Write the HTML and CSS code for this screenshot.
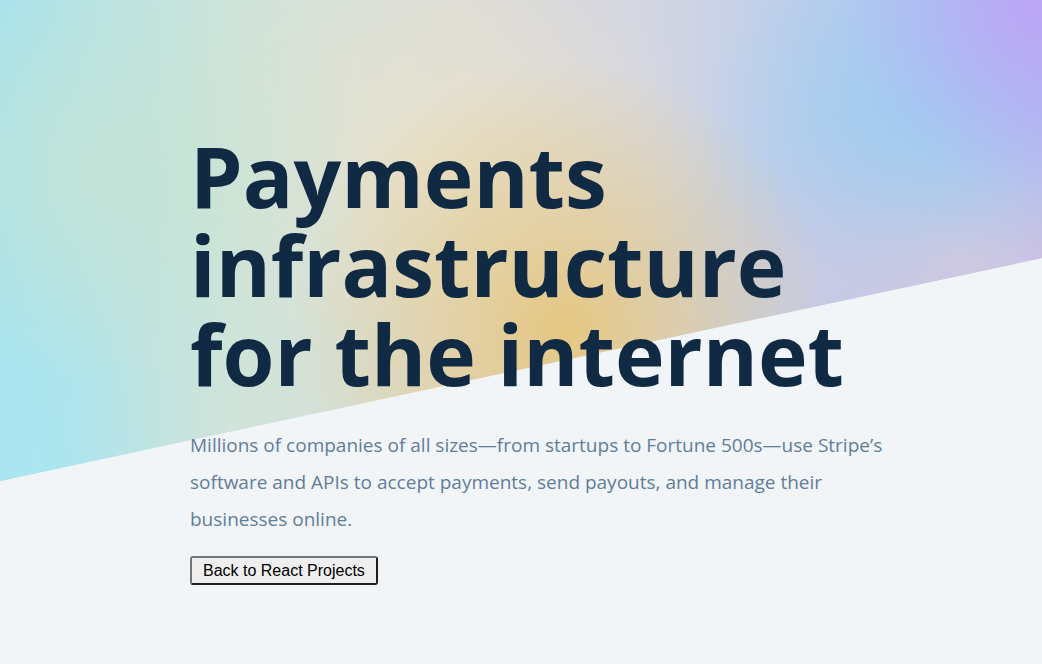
FILE: index.html
```html
<!DOCTYPE html>
<html lang="en">
<head>
<meta charset="utf-8">
<title>Stripe</title>
<link rel="stylesheet" href="styles.css">
</head>
<body>
<section class="hero">
  <div class="hero-bg"></div>
  <div class="hero-info">
    <h1 class="hero-title">Payments<br>infrastructure<br>for the internet</h1>
    <p class="hero-text">Millions of companies of all sizes—from startups to Fortune 500s—use Stripe’s software and APIs to accept payments, send payouts, and manage their businesses online.</p>
    <button class="back-btn" type="button">Back to React Projects</button>
  </div>
</section>
</body>
</html>
```

FILE: styles.css
```css
* { box-sizing: border-box; }
html, body { margin: 0; padding: 0; }
body {
  background: #f2f5f8;
  font-family: "Open Sans", "Noto Sans", sans-serif;
}
.hero {
  position: relative;
  min-height: 664px;
  overflow: hidden;
}
.hero-bg {
  position: absolute;
  inset: 0;
  clip-path: polygon(0 0, 100% 0, 100% 258px, 0 481px);
  background:
    radial-gradient(circle at 565px 330px, rgba(230,198,124,0.95) 0, rgba(230,198,124,0.6) 90px, rgba(230,198,124,0) 270px),
    radial-gradient(circle at 1042px 0, rgba(188,166,246,1) 0, rgba(188,166,246,0) 200px),
    radial-gradient(ellipse 220px 180px at 920px 115px, rgba(158,206,240,0.85) 0, rgba(158,206,240,0) 100%),
    radial-gradient(ellipse 260px 220px at 120px 170px, rgba(196,228,214,0.9) 0, rgba(196,228,214,0) 100%),
    radial-gradient(ellipse 160px 260px at 0 460px, rgba(170,230,242,1) 0, rgba(170,230,242,0) 100%),
    radial-gradient(ellipse 300px 200px at 420px 160px, rgba(232,226,206,0.9) 0, rgba(232,226,206,0) 100%),
    radial-gradient(ellipse 260px 160px at 960px 260px, rgba(214,200,222,1) 0, rgba(214,200,222,0) 100%),
    linear-gradient(90deg, #a6e3ee 0%, #cfe4da 22%, #dedcd6 45%, #d4d6e2 62%, #b8cced 80%, #a8c8f2 90%, #b6b2f2 100%);
}
.hero-info {
  position: relative;
  padding: 131px 0 0 190px;
}
.hero-title {
  margin: 0;
  font-size: 84px;
  line-height: 89px;
  font-weight: 700;
  color: #102a43;
  letter-spacing: 0;
}
.hero-text {
  margin: 29px 0 0;
  max-width: 700px;
  font-size: 19px;
  line-height: 37px;
  color: #617d98;
}
.back-btn {
  margin-top: 18px;
  font-family: "Liberation Sans", Arial, sans-serif;
  font-size: 16px;
  line-height: 19px;
  padding: 3px 11px;
  color: #000;
  background: #efefef;
  border: 2px solid;
  border-color: #767676 #1f1f1f #1f1f1f #767676;
  border-radius: 3px;
}
```
